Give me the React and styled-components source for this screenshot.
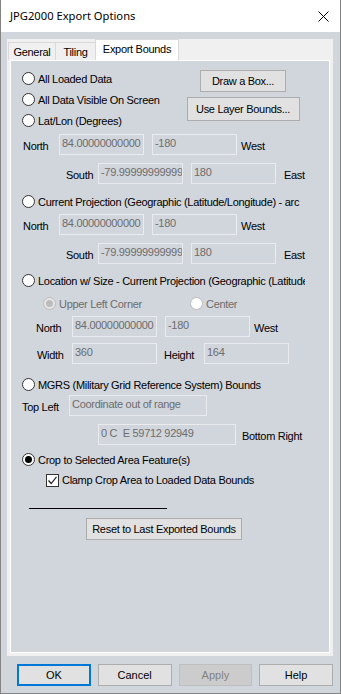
import styled, { createGlobalStyle } from "styled-components"

const Global = createGlobalStyle`
    body {
        margin: 0;
        font-family: "Liberation Sans", Arial, sans-serif;
        font-size: 11px;
        letter-spacing: -0.3px;
        color: #000;
    }
`

const App = () => {
    return (
        <>
            <Global />
            <Window>
                <TitleBar>
                    <Title>JPG2000 Export Options</Title>
                    <svg width="11" height="11" viewBox="0 0 11 11">
                        <path d="M0.5 0.5 L10.5 10.5 M10.5 0.5 L0.5 10.5" stroke="#000" strokeWidth="1" />
                    </svg>
                </TitleBar>
                <Body>
                    <TabControl>
                        <TabStrip>
                            <Tab $w={48}>General</Tab>
                            <Tab $w={41}>Tiling</Tab>
                            <Tab $w={84} $active>Export Bounds</Tab>
                        </TabStrip>
                        <Page>
                            <TopBlock>
                                <RadioCol>
                                    <Row $h={21} $indent={11}>
                                        <Radio />
                                        <Text>All Loaded Data</Text>
                                    </Row>
                                    <Row $h={21} $indent={11}>
                                        <Radio />
                                        <Text>All Data Visible On Screen</Text>
                                    </Row>
                                    <Row $h={21} $indent={11}>
                                        <Radio />
                                        <Text>Lat/Lon (Degrees)</Text>
                                    </Row>
                                </RadioCol>
                                <ButtonCol>
                                    <Button $w={86}>Draw a Box...</Button>
                                    <Button $w={113} $h={24}>Use Layer Bounds...</Button>
                                </ButtonCol>
                            </TopBlock>

                            <Row $mt={3} $indent={12}>
                                <Label $w={36}>North</Label>
                                <Field $w={85}>84.00000000000</Field>
                                <Field $w={85} $ml={8}>-180</Field>
                                <Label $ml={4}>West</Label>
                            </Row>
                            <Row $mt={8} $indent={55}>
                                <Label $w={32}>South</Label>
                                <Field $w={85}>-79.99999999999</Field>
                                <Field $w={85} $ml={8}>180</Field>
                                <Label $ml={8}>East</Label>
                            </Row>

                            <Row $mt={7} $indent={11} $clip={283}>
                                <Radio />
                                <Text>Current Projection (Geographic (Latitude/Longitude) - arc</Text>
                            </Row>
                            <Row $mt={2} $indent={12}>
                                <Label $w={36}>North</Label>
                                <Field $w={85}>84.00000000000</Field>
                                <Field $w={85} $ml={8}>-180</Field>
                                <Label $ml={4}>West</Label>
                            </Row>
                            <Row $mt={8} $indent={55}>
                                <Label $w={32}>South</Label>
                                <Field $w={85}>-79.99999999999</Field>
                                <Field $w={85} $ml={8}>180</Field>
                                <Label $ml={8}>East</Label>
                            </Row>

                            <Row $mt={6} $indent={11} $clip={283}>
                                <Radio />
                                <Text>Location w/ Size - Current Projection (Geographic (Latitude/Longitude)</Text>
                            </Row>
                            <Row $mt={2} $indent={32}>
                                <SubOption $w={147}>
                                    <Radio checked disabled />
                                    <Text $muted>Upper Left Corner</Text>
                                </SubOption>
                                <SubOption>
                                    <Radio disabled />
                                    <Text $muted>Center</Text>
                                </SubOption>
                            </Row>
                            <Row $mt={2} $indent={25}>
                                <Label $w={36}>North</Label>
                                <Field $w={85}>84.00000000000</Field>
                                <Field $w={85} $ml={8}>-180</Field>
                                <Label $ml={4}>West</Label>
                            </Row>
                            <Row $mt={6} $indent={26}>
                                <Label $w={35}>Width</Label>
                                <Field $w={85}>360</Field>
                                <Label $w={40} $ml={7}>Height</Label>
                                <Field $w={85}>164</Field>
                            </Row>

                            <Row $mt={10} $indent={11}>
                                <Radio />
                                <Text>MGRS (Military Grid Reference System) Bounds</Text>
                            </Row>
                            <Row $mt={0} $indent={11}>
                                <Label $w={47}>Top Left</Label>
                                <Field $w={138}>Coordinate out of range</Field>
                            </Row>
                            <Row $mt={8} $indent={87}>
                                <Field $w={138}>0 C&nbsp;&nbsp;E 59712 92949</Field>
                                <Label $ml={6}>Bottom Right</Label>
                            </Row>

                            <Row $mt={4} $indent={11}>
                                <Radio checked />
                                <Text>Crop to Selected Area Feature(s)</Text>
                            </Row>
                            <Row $mt={0} $h={20} $indent={35}>
                                <CheckBox>
                                    <svg width="11" height="11" viewBox="0 0 11 11">
                                        <path d="M1.5 5.5 L4.2 8.5 L9.5 1.8" fill="none" stroke="#222" strokeWidth="1.2" />
                                    </svg>
                                </CheckBox>
                                <Text $gap={3}>Clamp Crop Area to Loaded Data Bounds</Text>
                            </Row>

                            <Separator />
                            <Row $mt={9} $h={22} $indent={75}>
                                <Button $w={156}>Reset to Last Exported Bounds</Button>
                            </Row>
                        </Page>
                    </TabControl>
                    <Footer>
                        <DialogButton $default>OK</DialogButton>
                        <DialogButton>Cancel</DialogButton>
                        <DialogButton $disabled>Apply</DialogButton>
                        <DialogButton>Help</DialogButton>
                    </Footer>
                </Body>
            </Window>
        </>
    )
}

export default App

const Radio = ({ checked, disabled }) => (
    <Circle $checked={checked} $disabled={disabled} />
)

const Window = styled.div`
    width: 341px;
    height: 694px;
    box-sizing: border-box;
    border: 1px solid #838383;
    border-top: none;
    background: #d1d5dc;
    display: flex;
    flex-direction: column;
    overflow: hidden;
`

const TitleBar = styled.div`
    height: 31px;
    flex-shrink: 0;
    background: #fff;
    display: flex;
    align-items: center;
    justify-content: space-between;
    padding: 0 11px 1px 9px;

    svg {
        margin-top: 1px;
    }
`

const Title = styled.span`
    font-family: "Noto Sans", "Open Sans", sans-serif;
    font-size: 11.2px;
    letter-spacing: 0;
`

const Body = styled.div`
    padding: 7px 7px 0 6px;
    display: flex;
    flex-direction: column;
`

const TabControl = styled.div`
    width: 326px;
    height: 617px;
    background: #f0f0f0;
    display: flex;
    flex-direction: column;
`

const TabStrip = styled.div`
    height: 21px;
    display: flex;
    align-items: flex-end;
    padding-left: 2px;
    background: #f0f0f0;
`

const Tab = styled.div`
    width: ${(p) => p.$w}px;
    height: ${(p) => (p.$active ? 21 : 18)}px;
    box-sizing: border-box;
    border: 1px solid #d9d9d9;
    border-bottom: none;
    margin-left: -1px;
    background: ${(p) => (p.$active ? "#fff" : "#f0f0f0")};
    display: flex;
    align-items: center;
    justify-content: center;
    padding-bottom: ${(p) => (p.$active ? 2 : 0)}px;
    position: relative;
    z-index: ${(p) => (p.$active ? 1 : 0)};
`

const Page = styled.div`
    margin: 0 3px;
    height: 593px;
    box-sizing: border-box;
    border: 1px solid #fff;
    background: #d1d5dc;
    display: flex;
    flex-direction: column;
`

const TopBlock = styled.div`
    display: flex;
    justify-content: space-between;
`

const RadioCol = styled.div`
    display: flex;
    flex-direction: column;
    padding-top: 7px;
`

const ButtonCol = styled.div`
    width: 134px;
    margin-right: 19px;
    padding-top: 9px;
    display: flex;
    flex-direction: column;
    align-items: center;
    gap: 5px;
`

const Row = styled.div`
    height: ${(p) => p.$h || 21}px;
    margin-top: ${(p) => p.$mt || 0}px;
    padding-left: ${(p) => p.$indent || 0}px;
    width: ${(p) => (p.$clip ? `${p.$clip}px` : "auto")};
    display: flex;
    align-items: center;
    white-space: nowrap;
    overflow: hidden;
    flex-shrink: 0;
`

const Circle = styled.span`
    width: 13px;
    height: 13px;
    box-sizing: border-box;
    flex-shrink: 0;
    border-radius: 50%;
    border: 1px solid ${(p) => (p.$disabled ? "#bcbcbc" : "#333")};
    background: ${(p) => (p.$disabled && p.$checked ? "#e6e6e6" : "#fff")};
    display: flex;
    align-items: center;
    justify-content: center;

    &::after {
        content: "";
        display: ${(p) => (p.$checked ? "block" : "none")};
        width: 7px;
        height: 7px;
        border-radius: 50%;
        background: ${(p) => (p.$disabled ? "#bcbcbc" : "#000")};
    }
`

const CheckBox = styled.span`
    width: 13px;
    height: 13px;
    box-sizing: border-box;
    flex-shrink: 0;
    border: 1px solid #333;
    background: #fff;
    display: flex;
    align-items: center;
    justify-content: center;
`

const Text = styled.span`
    margin-left: ${(p) => p.$gap || 3}px;
    color: ${(p) => (p.$muted ? "#6d6d6d" : "#000")};
`

const SubOption = styled.div`
    display: flex;
    align-items: center;
    width: ${(p) => (p.$w ? `${p.$w}px` : "auto")};
`

const Label = styled.span`
    width: ${(p) => (p.$w ? `${p.$w}px` : "auto")};
    margin-left: ${(p) => p.$ml || 0}px;
    flex-shrink: 0;
    padding-top: 2px;
`

const Field = styled.div`
    width: ${(p) => p.$w}px;
    height: 21px;
    box-sizing: border-box;
    flex-shrink: 0;
    margin-left: ${(p) => p.$ml || 0}px;
    border: 1px solid #e9ebef;
    padding: 0 2px;
    line-height: 17px;
    color: #6d6d6d;
    overflow: hidden;
    white-space: nowrap;
`

const Button = styled.div`
    width: ${(p) => p.$w}px;
    height: ${(p) => p.$h || 22}px;
    box-sizing: border-box;
    border: 1px solid #adadad;
    background: #e1e1e1;
    display: flex;
    align-items: center;
    justify-content: center;
    white-space: nowrap;
`

const Separator = styled.div`
    margin: 18px 0 0 18px;
    width: 138px;
    height: 1px;
    background: #000;
    flex-shrink: 0;
`

const Footer = styled.div`
    display: flex;
    gap: 7px;
    padding: 8px 0 0 10px;
`

const DialogButton = styled.div`
    width: 74px;
    height: 22px;
    box-sizing: border-box;
    border: ${(p) => (p.$default ? "2px solid #0078d7" : p.$disabled ? "1px solid #bfbfbf" : "1px solid #adadad")};
    background: ${(p) => (p.$disabled ? "#cccccc" : "#e1e1e1")};
    color: ${(p) => (p.$disabled ? "#838383" : "#000")};
    display: flex;
    align-items: center;
    justify-content: center;
    letter-spacing: 0;
`
